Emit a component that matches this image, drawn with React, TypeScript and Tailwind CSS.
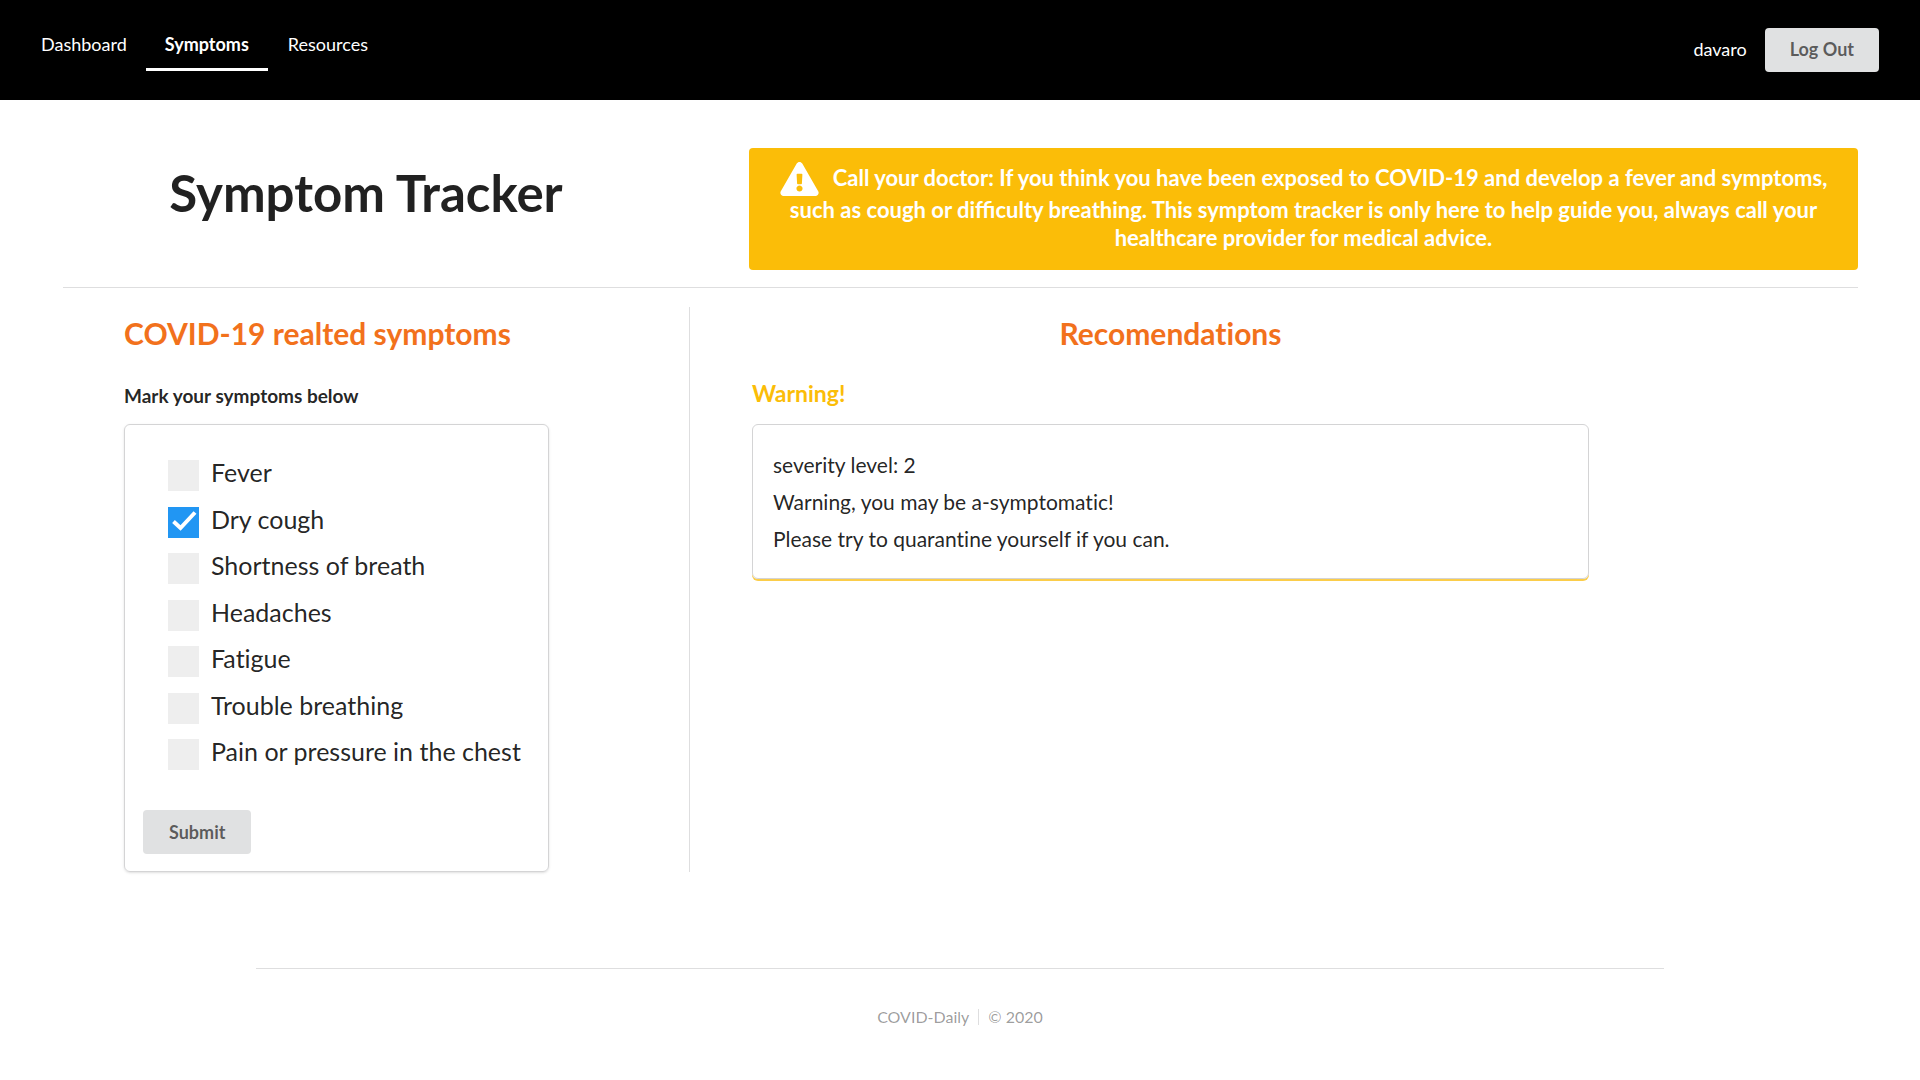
import React, { useState } from 'react';

const symptoms = ['Fever', 'Dry cough', 'Shortness of breath', 'Headaches', 'Fatigue', 'Trouble breathing', 'Pain or pressure in the chest'];

function Nav() {
  return (
    <header className="flex min-h-[100px] items-center justify-between bg-black px-[41px] text-[18px] text-white">
      <nav className="flex self-start pt-[17px] leading-[18px]">
        <a href="#dashboard" className="pt-[18px] pr-[19px]">Dashboard</a>
        <a href="#symptoms" className="border-b-3 border-white px-[19px] pt-[18px] pb-[15px] font-bold">Symptoms</a>
        <a href="#resources" className="px-5 pt-[18px]">Resources</a>
      </nav>
      <div className="flex items-center gap-[18px]">
        <span className="pb-0.5">davaro</span>
        <button className="h-11 rounded bg-[#e0e1e2] px-[25px] pb-0.5 font-bold text-black/60">Log Out</button>
      </div>
    </header>
  );
}

export default function App() {
  const [checked, setChecked] = useState<string[]>(['Dry cough']);
  const toggle = (s: string) => setChecked((c) => (c.includes(s) ? c.filter((x) => x !== s) : [...c, s]));
  return (
    <div className="min-h-screen bg-white font-['Lato',sans-serif] text-black/87 [font-variant-ligatures:none]">
      <Nav />
      <main className="pt-12 pr-[62px] pl-[63px]">
        <div className="flex border-b border-[#dededf] pb-[17px]">
          <h1 className="w-[606px] shrink-0 pt-[13px] text-center text-[51px] leading-[64px] font-bold">Symptom Tracker</h1>
          <div className="ml-20 flex-1 rounded bg-[#fbbd08] px-5 pt-[14px] pb-[18px] text-center text-[22px] leading-7 font-bold text-white [font-variant-ligatures:normal]">
            <svg className="mr-[14px] inline-block h-[34px] w-[39px] [vertical-align:-10px]" viewBox="0 0 576 512" fill="currentColor" aria-hidden="true">
              <path d="M569.5 440c18.500 32-4.700 72-41.600 72H48.100c-36.900 0-60-40-41.600-72L246.400 24c18.500-32 64.700-32 83.200 0l239.900 416zM288 354c-25.400 0-46 20.600-46 46s20.600 46 46 46 46-20.600 46-46-20.600-46-46-46zm-43.700-165.300l7.400 136c.4 6.400 5.600 11.300 12 11.300h48.500c6.400 0 11.600-5 12-11.300l7.400-136c.4-6.900-5.100-12.700-12-12.700h-63.400c-6.900 0-12.300 5.800-11.900 12.700z" />
            </svg>
            Call your doctor: If you think you have been exposed to COVID-19 and develop a fever and symptoms, such as cough or difficulty breathing. This symptom tracker is only here to help guide you, always call your healthcare provider for medical advice.
          </div>
        </div>
        <div className="mt-[19px] flex">
          <section className="w-[627px] shrink-0 border-r border-[#dededf] pl-[61px]">
            <h2 className="pt-[7px] text-[30px] leading-[38px] font-bold text-[#f2711c]">COVID-19 realted symptoms</h2>
            <h3 className="mt-8 text-[19px] leading-6 font-bold">Mark your symptoms below</h3>
            <form onSubmit={(e) => e.preventDefault()} className="mt-4 w-[425px] rounded-md border border-[#d4d4d5] px-[18px] pt-[31px] pb-[17px] shadow-sm">
              <ul className="flex min-h-[314px] flex-col justify-between pl-[25px]">
                {symptoms.map((s) => (
                  <li key={s}>
                    <label className="flex cursor-pointer gap-3 text-[25px] leading-[33px]">
                      <span className="relative mt-1 h-[31px] w-[31px]">
                        <input type="checkbox" checked={checked.includes(s)} onChange={() => toggle(s)} className="block h-[31px] w-[31px] appearance-none bg-[#eee] checked:bg-[#2196f3]" />
                        {checked.includes(s) && (
                          <svg className="pointer-events-none absolute inset-0 h-[31px] w-[31px]" viewBox="0 0 31 31" fill="none" stroke="white" strokeWidth="4" aria-hidden="true">
                            <path d="M5.500 14.500l7 6.500L27 5.500" />
                          </svg>
                        )}
                      </span>
                      {s}
                    </label>
                  </li>
                ))}
              </ul>
              <button className="mt-10 h-11 rounded bg-[#e0e1e2] px-[26px] text-[18px] font-bold text-black/60">Submit</button>
            </form>
          </section>
          <section className="ml-[62px] w-[837px]">
            <h2 className="pt-[7px] text-center text-[30px] leading-[38px] font-bold text-[#f2711c]">Recomendations</h2>
            <h3 className="mt-[27px] text-[23px] leading-7 font-bold text-[#fbbd08]">Warning!</h3>
            <div className="mt-[17px] rounded-md border border-[#d4d4d5] px-5 py-[21px] text-[21px] leading-[37px] shadow-[0_2px_0_0_#fbcd4a]">
              <p>severity level: 2</p>
              <p>Warning, you may be a-symptomatic!</p>
              <p>Please try to quarantine yourself if you can.</p>
            </div>
          </section>
        </div>
      </main>
      <footer className="mx-64 mt-24 flex justify-center border-t border-[#dededf] pt-10 text-[16px] leading-4 text-black/40">
        <span className="border-r border-[#dededf] pr-[9px]">COVID-Daily</span>
        <span className="pl-[9px]">© 2020</span>
      </footer>
    </div>
  );
}
